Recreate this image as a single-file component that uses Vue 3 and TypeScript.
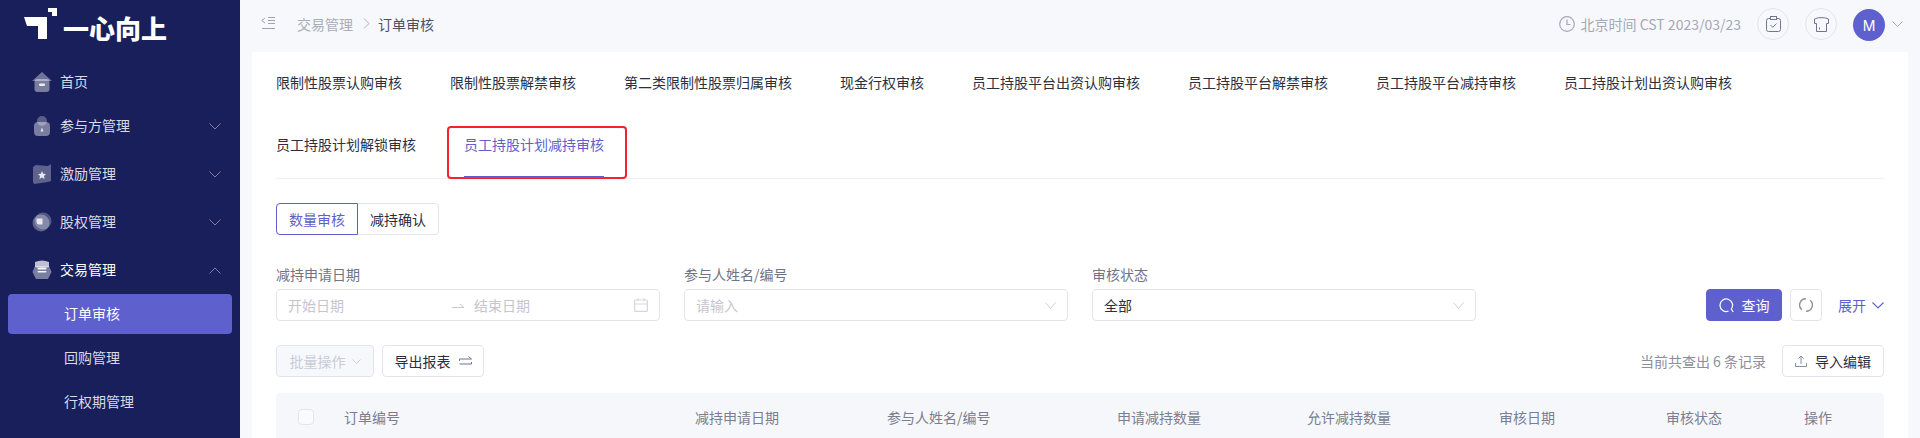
<script setup lang="ts">
interface MenuItem {
  label: string
  icon: string
  arrow?: 'down' | 'up'
  active?: boolean
}

const menu: MenuItem[] = [
  { label: '首页', icon: 'home' },
  { label: '参与方管理', icon: 'user', arrow: 'down' },
  { label: '激励管理', icon: 'star', arrow: 'down' },
  { label: '股权管理', icon: 'pie', arrow: 'down' },
  { label: '交易管理', icon: 'trade', arrow: 'up', active: true },
]
const subMenu = ['订单审核', '回购管理', '行权期管理']
const tabs = [
  '限制性股票认购审核',
  '限制性股票解禁审核',
  '第二类限制性股票归属审核',
  '现金行权审核',
  '员工持股平台出资认购审核',
  '员工持股平台解禁审核',
  '员工持股平台减持审核',
  '员工持股计划出资认购审核',
  '员工持股计划解锁审核',
]
const columns = ['订单编号', '减持申请日期', '参与人姓名/编号', '申请减持数量', '允许减持数量', '审核日期', '审核状态', '操作']
</script>

<template>
  <div class="page">
    <aside class="sidebar">
      <div class="logo">
        <svg class="logo-mark" width="34" height="34" viewBox="0 0 34 34">
          <path d="M0 9H23V31H14V18H3Z" fill="#fff" />
          <path d="M24 0H33V8H28V4H24Z" fill="#fff" />
        </svg>
        <span class="logo-text">一心向上</span>
      </div>
      <nav>
        <div v-for="item in menu" :key="item.label" class="menu-item" :class="{ open: item.active }">
          <svg class="menu-icon" width="20" height="20" viewBox="0 0 20 20">
            <template v-if="item.icon === 'home'">
              <path d="M10 0 20 9H0Z" fill="#fff" fill-opacity=".38" />
              <rect x="2.500" y="7" width="15" height="13" rx="3" fill="#fff" fill-opacity=".42" />
              <rect x="7" y="11.500" width="6" height="2.500" rx="1" fill="#fff" fill-opacity=".85" />
            </template>
            <template v-else-if="item.icon === 'user'">
              <circle cx="10" cy="5" r="5" fill="#fff" fill-opacity=".28" />
              <rect x="2" y="6" width="16" height="14" rx="4" fill="#fff" fill-opacity=".42" />
              <path d="M10 11.500 11.500 15.500H8.500Z" fill="#fff" fill-opacity=".8" />
            </template>
            <template v-else-if="item.icon === 'star'">
              <path d="M4 1 16 2 19 0V17L16 18 2 20 1 18V3Z" fill="#fff" fill-opacity=".3" />
              <path d="M10 7 11.200 9.800 14 10.100 12 12 12.600 15 10 13.500 7.400 15 8 12 6 10.100 8.800 9.800Z" fill="#fff" fill-opacity=".85" />
            </template>
            <template v-else-if="item.icon === 'pie'">
              <circle cx="11" cy="9" r="8.500" fill="#fff" fill-opacity=".25" />
              <circle cx="9" cy="11" r="8.500" fill="#fff" fill-opacity=".3" />
              <path d="M4.500 6.500H10.500V12.500H7A3 3 0 0 1 4.500 9.500Z" fill="#fff" fill-opacity=".8" />
            </template>
            <template v-else>
              <path d="M3 2Q10 -1 17 2L17 7Q10 9 3 7Z" fill="#fff" fill-opacity=".72" />
              <path d="M3 6H17L19.500 12 16 19H4L.5 12Z" fill="#fff" fill-opacity=".42" />
              <rect x="5.500" y="8" width="9" height="1.500" rx=".75" fill="#fff" fill-opacity=".95" />
              <rect x="5.500" y="11" width="9" height="1.500" rx=".75" fill="#fff" fill-opacity=".95" />
            </template>
          </svg>
          <span class="menu-label">{{ item.label }}</span>
          <svg v-if="item.arrow" class="menu-arrow" width="12" height="7" viewBox="0 0 12 7" fill="none">
            <path :d="item.arrow === 'up' ? 'M.5 6.500 6 1l5.500 5.500' : 'M.5.5 6 6 11.500.5'" stroke="#7b7fa6" stroke-width="1" />
          </svg>
        </div>
        <div v-for="(sub, i) in subMenu" :key="sub" class="sub-item">
          <div class="sub-inner" :class="{ selected: i === 0 }">{{ sub }}</div>
        </div>
      </nav>
    </aside>

    <div class="main">
      <header class="topbar">
        <div class="crumbs">
          <svg class="collapse" width="15" height="13" viewBox="0 0 15 13" fill="none" stroke="#9ea2b3" stroke-width="1">
            <path d="M4 1 .8 3.500 4 6M7 .5h7M7 3.500h7M7 6.500h7M1 11.500h13" />
          </svg>
          <span class="crumb">交易管理</span>
          <svg class="crumb-sep" width="7" height="11" viewBox="0 0 7 11" fill="none"><path d="M1 .5 6 5.500 1 10.500" stroke="#a9adb9" /></svg>
          <span class="crumb current">订单审核</span>
        </div>
        <div class="top-right">
          <svg width="16" height="16" viewBox="0 0 16 16" fill="none" stroke="#a4a8b8" stroke-width="1.200">
            <circle cx="8" cy="8" r="7.300" />
            <path d="M8 3.500V8.500H11.500" />
          </svg>
          <span class="clock-text">北京时间 CST 2023/03/23</span>
          <span class="circle first">
            <svg width="15" height="16" viewBox="0 0 15 16" fill="none" stroke="#70748c" stroke-width="1">
              <rect x=".5" y="2.500" width="14" height="13" rx="2" />
              <rect x="4.500" y=".5" width="6" height="3" fill="#f7f8fc" />
              <path d="M4.500 9 6.800 11.300 10.500 7.500" />
            </svg>
          </span>
          <span class="circle">
            <svg width="15" height="15" viewBox="0 0 15 15" fill="none" stroke="#70748c" stroke-width="1">
              <path d="M4.500.7H10.500L14.500 2V6.500H12.500V14.500H2.500V6.500H.5V2Z" />
              <path d="M5.500 10.500V12.500" />
            </svg>
          </span>
          <span class="avatar">M</span>
          <svg class="avatar-arrow" width="11" height="6" viewBox="0 0 11 6" fill="none"><path d="M.5.5 5.500 5.500 10.500.5" stroke="#a4a8b8" /></svg>
        </div>
      </header>

      <main class="card">
        <div class="tabs">
          <span v-for="tab in tabs" :key="tab" class="tab">{{ tab }}</span>
          <span class="tab active">
            员工持股计划减持审核
            <i class="highlight"></i>
          </span>
        </div>

        <div class="segmented">
          <span class="segment on">数量审核</span>
          <span class="segment">减持确认</span>
        </div>

        <form class="filters" @submit.prevent>
          <div class="field">
            <label>减持申请日期</label>
            <div class="control range">
              <span class="ph range-start">开始日期</span>
              <svg class="range-arrow" width="12" height="5" viewBox="0 0 12 5" fill="none"><path d="M0 4.500H12L8 1" stroke="#c5c8d6" /></svg>
              <span class="ph range-end">结束日期</span>
              <svg width="14" height="14" viewBox="0 0 14 14" fill="none" stroke="#d4d7e3" stroke-width="1.200">
                <rect x=".6" y="2" width="12.800" height="11.400" rx="1" />
                <path d="M.6 6H13.400M4 0V3M10 0V3" />
              </svg>
            </div>
          </div>
          <div class="field">
            <label>参与人姓名/编号</label>
            <div class="control">
              <span class="ph">请输入</span>
              <svg width="11" height="7" viewBox="0 0 11 7" fill="none"><path d="M.5.5 5.500 6.500 10.500.5" stroke="#cdd0dd" /></svg>
            </div>
          </div>
          <div class="field">
            <label>审核状态</label>
            <div class="control">
              <span class="value">全部</span>
              <svg width="11" height="7" viewBox="0 0 11 7" fill="none"><path d="M.5.5 5.500 6.500 10.500.5" stroke="#cdd0dd" /></svg>
            </div>
          </div>
          <div class="actions">
            <button class="btn primary" type="button">
              <svg width="15" height="15" viewBox="0 0 15 15" fill="none" stroke="#fff" stroke-width="1.200">
                <path d="M9.500 13.100A6.300 6.300 0 1 1 12.300 11L14.200 14" />
              </svg>
              查询
            </button>
            <button class="btn square" type="button">
              <svg width="14" height="14" viewBox="0 0 14 14" fill="none" stroke="#8d90a3" stroke-width="1.400">
                <path d="M2.800 11.700A6.200 6.200 0 0 1 7 .8M11.200 2.300A6.200 6.200 0 0 1 7 13.200" />
              </svg>
            </button>
            <span class="expand">
              展开
              <svg width="12" height="7" viewBox="0 0 12 7" fill="none"><path d="M.5.5 6 6 11.500.5" stroke="#5e60ce" stroke-width="1.100" /></svg>
            </span>
          </div>
        </form>

        <div class="toolbar">
          <div class="toolbar-left">
            <button class="btn disabled" type="button">
              批量操作
              <svg width="9" height="5" viewBox="0 0 9 5" fill="none"><path d="M.5.5 4.500 4.500 8.500.5" stroke="#ccd0de" /></svg>
            </button>
            <button class="btn outline" type="button">
              导出报表
              <svg width="13" height="11" viewBox="0 0 13 11" fill="none" stroke="#70748c">
                <path d="M.5 5V3H12.500L9.500.5M12.500 6V8H.5" />
              </svg>
            </button>
          </div>
          <div class="toolbar-right">
            <span class="count">当前共查出 6 条记录</span>
            <button class="btn outline" type="button">
              <svg width="12" height="12" viewBox="0 0 12 12" fill="none" stroke="#8d90a3">
                <path d="M.5 8V11.500H11.500V8M6 9V1M3.500 3.500 6 1 8.500 3.500" />
              </svg>
              导入编辑
            </button>
          </div>
        </div>

        <div class="thead">
          <div class="check-cell"><span class="checkbox"></span></div>
          <div v-for="col in columns" :key="col">{{ col }}</div>
        </div>
      </main>
    </div>
  </div>
</template>

<style scoped>
.page {
  display: flex;
  height: 100vh;
  overflow: hidden;
  background: #f7f8fc;
  font-family: "Noto Sans CJK SC", "Liberation Sans", sans-serif;
  font-size: 14px;
  color: #2b2f3f;
}
.sidebar {
  flex: 0 0 240px;
  background: #191f5b;
  color: #d8dae8;
  overflow: hidden;
}
.logo {
  position: relative;
  height: 60px;
}
.logo-mark {
  position: absolute;
  left: 24px;
  top: 8px;
}
.logo-text {
  position: absolute;
  left: 63px;
  top: 10px;
  font-size: 26px;
  line-height: 36px;
  font-weight: 900;
  color: #fff;
  white-space: nowrap;
}
.menu-item {
  display: flex;
  align-items: center;
  height: 44px;
  margin-bottom: 4px;
  padding: 0 19px 0 32px;
}
.menu-item:first-child {
  margin-bottom: 0;
}
.menu-item.open {
  margin-bottom: 0;
  color: #fff;
}
.menu-icon {
  margin-right: 8px;
}
.menu-label {
  line-height: 20px;
  padding-bottom: 2px;
}
.menu-arrow {
  margin-left: auto;
}
.sub-item {
  height: 44px;
  padding: 2px 8px;
  box-sizing: border-box;
}
.sub-inner {
  height: 40px;
  line-height: 38px;
  padding-left: 56px;
  border-radius: 4px;
}
.sub-inner.selected {
  background: #5e60ce;
  color: #fff;
}
.main {
  flex: 1;
  min-width: 0;
  padding: 0 12px;
}
.topbar {
  display: flex;
  align-items: center;
  justify-content: space-between;
  height: 52px;
  padding-right: 5px;
}
.crumbs {
  display: flex;
  align-items: center;
  line-height: 22px;
  margin-top: -5px;
}
.collapse {
  margin: 0 21px 0 9px;
}
.crumb {
  color: #a9adb9;
}
.crumb.current {
  color: #4a5065;
}
.crumb-sep {
  margin: 0 8px 0 10px;
}
.top-right {
  display: flex;
  align-items: center;
  margin-top: -4px;
}
.clock-text {
  margin-left: 6px;
  color: #a4a8b8;
}
.circle {
  display: flex;
  align-items: center;
  justify-content: center;
  width: 32px;
  height: 32px;
  margin-left: 16px;
  border: 1px solid #e3e5ee;
  border-radius: 50%;
  box-sizing: border-box;
}
.avatar {
  display: flex;
  align-items: center;
  justify-content: center;
  width: 32px;
  height: 32px;
  margin: 2px 0 0 16px;
  border-radius: 50%;
  background: #5e60ce;
  color: #fff;
  font-size: 14px;
  font-family: "Inter", "Liberation Sans", sans-serif;
}
.avatar-arrow {
  margin-left: 7px;
}
.card {
  height: 386px;
  padding: 12px 24px 0;
  background: #fff;
  box-sizing: border-box;
}
.tabs {
  display: flex;
  flex-wrap: wrap;
  gap: 10px 48px;
  border-bottom: 1px solid #eeeff6;
}
.tab {
  position: relative;
  height: 52px;
  padding-top: 7px;
  line-height: 22px;
  box-sizing: border-box;
  color: #2b2f3f;
}
.tab.active {
  color: #5e60ce;
}
.tab.active::after {
  content: "";
  position: absolute;
  left: 0;
  right: 0;
  bottom: 0;
  height: 2px;
  background: #5e60ce;
  z-index: 1;
}
.highlight {
  position: absolute;
  top: 0;
  left: -17px;
  right: -23px;
  bottom: -1px;
  border: 2px solid #f5222d;
  border-radius: 4px;
}
.segmented {
  display: flex;
  margin-top: 24px;
}
.segment {
  height: 32px;
  padding: 0 12px;
  line-height: 30px;
  border: 1px solid #e3e5ee;
  box-sizing: border-box;
  background: #fff;
}
.segment:first-child {
  border-radius: 4px 0 0 4px;
}
.segment:last-child {
  margin-left: -1px;
  border-radius: 0 4px 4px 0;
}
.segment.on {
  position: relative;
  z-index: 1;
  color: #5e60ce;
  border-color: #5e60ce;
}
.filters {
  display: grid;
  grid-template-columns: repeat(4, 384px);
  gap: 24px;
  margin-top: 28px;
  align-items: end;
}
.field label {
  display: block;
  height: 22px;
  margin-bottom: 4px;
  line-height: 22px;
  color: #707485;
}
.control {
  display: flex;
  align-items: center;
  justify-content: space-between;
  height: 32px;
  padding: 0 11px;
  border: 1px solid #e3e5ee;
  border-radius: 4px;
  box-sizing: border-box;
}
.ph {
  color: #c4c6cf;
}
.value {
  color: #2b2f3f;
}
.range {
  justify-content: flex-start;
}
.range-start {
  width: 164px;
}
.range-arrow {
  margin-right: 10px;
}
.range-end {
  flex: 1;
}
.actions {
  display: flex;
  align-items: center;
  justify-content: flex-end;
  height: 32px;
}
.btn {
  display: inline-flex;
  align-items: center;
  justify-content: center;
  gap: 8px;
  height: 32px;
  padding: 0 12px;
  border: 1px solid #e3e5ee;
  border-radius: 4px;
  box-sizing: border-box;
  background: #fff;
  color: #2b2f3f;
  font: inherit;
}
.btn.primary {
  width: 76px;
  padding: 0;
  background: #5e60ce;
  border-color: #5e60ce;
  color: #fff;
}
.btn.square {
  width: 32px;
  padding: 0;
  margin-left: 8px;
}
.expand {
  display: inline-flex;
  align-items: center;
  gap: 6px;
  margin-left: 16px;
  color: #5e60ce;
}
.toolbar {
  display: flex;
  justify-content: space-between;
  margin-top: 24px;
}
.toolbar-left,
.toolbar-right {
  display: flex;
  align-items: center;
  gap: 8px;
}
.toolbar-right {
  gap: 16px;
}
.btn.disabled {
  width: 98px;
  padding: 0;
  gap: 6px;
  background: #f7f8fc;
  color: #c9ccd8;
}
.btn.outline {
  width: 102px;
  padding: 0;
}
.count {
  color: #8b8e9d;
}
.thead {
  display: grid;
  grid-template-columns: 68px 351px 192px 230px 190px 192px 167px 138px 80px;
  align-items: center;
  height: 48px;
  margin-top: 16px;
  background: #f6f7fb;
  border-radius: 4px 4px 0 0;
  color: #7a7e8f;
}
.check-cell {
  padding-left: 22px;
  line-height: 0;
}
.checkbox {
  display: inline-block;
  width: 16px;
  height: 16px;
  border: 1px solid #e3e5ee;
  border-radius: 4px;
  box-sizing: border-box;
  background: #fbfbfd;
}
</style>

<style>
html,
body {
  margin: 0;
  overflow: hidden;
}
</style>
